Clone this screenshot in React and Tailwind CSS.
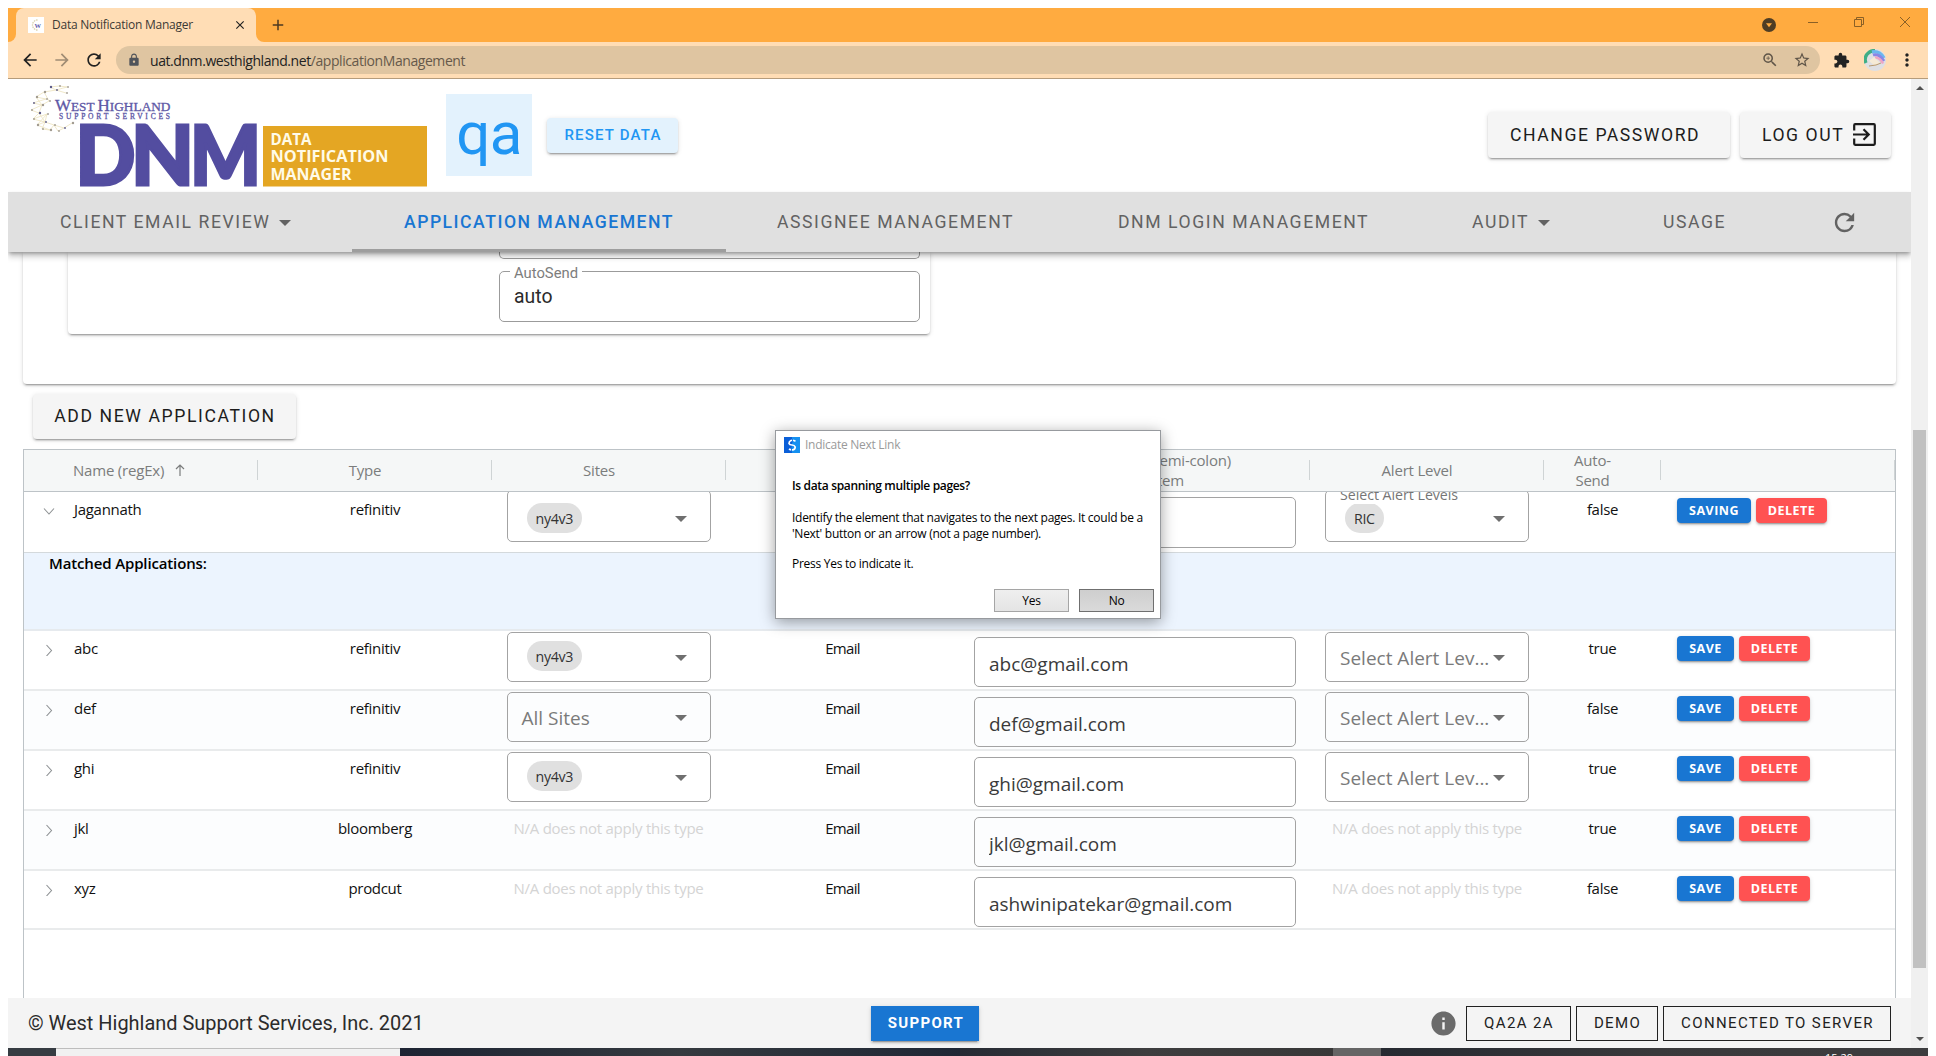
import React from "react";
import {
  MdArrowBack,
  MdArrowForward,
  MdRefresh,
  MdLock,
  MdZoomIn,
  MdStarBorder,
  MdExtension,
  MdMoreVert,
  MdClose,
  MdAdd,
  MdInfo,
} from "react-icons/md";

const COLS = "grid grid-cols-[234px_234px_234px_233px_351px_234px_117px_234px]";
const RAISED =
  "shadow-[0_3px_1px_-2px_rgba(0,0,0,.2),0_2px_2px_0_rgba(0,0,0,.14),0_1px_5px_0_rgba(0,0,0,.12)]";

const Caret = ({ className = "" }) => (
  <svg viewBox="0 0 12 6" className={`h-[6px] w-[12px] shrink-0 fill-current ${className}`}>
    <path d="M0 0h12L6 6z" />
  </svg>
);

/* ---------- browser chrome ---------- */

function Favicon() {
  return (
    <svg viewBox="0 0 16 16" className="h-4 w-4 bg-white">
      <path d="M9.500 3A5 5 0 1 0 9.500 13" fill="none" stroke="#d8cfa8" strokeWidth="1.3" strokeDasharray="1.5 .8" />
      <text x="6.500" y="10.500" fontSize="6.500" fontFamily="Liberation Serif, serif" fontWeight="700" fill="#5b5aa8">W</text>
    </svg>
  );
}

function TabBar() {
  return (
    <div className="flex h-[34px] shrink-0 bg-[#ffab40]">
      <div className="flex w-2 items-end bg-[#ffddb5]">
        <div className="h-full w-2 rounded-br-lg bg-[#ffab40]" />
      </div>
      <div className="flex w-[240px] items-center rounded-t-lg bg-[#ffddb5] pl-3">
        <Favicon />
        <span className="ml-2 w-[181px] text-[12px] tracking-[-0.25px] text-[#3c3a36]">Data Notification Manager</span>
        <MdClose className="h-[14px] w-[14px] shrink-0 text-[#222]" />
      </div>
      <div className="w-2 bg-[#ffddb5]">
        <div className="h-full w-2 rounded-bl-lg bg-[#ffab40]" />
      </div>
      <MdAdd className="mt-2 ml-[5px] h-[18px] w-[18px] text-[#4d3a20]" />
      <div className="ml-auto flex items-start pr-[18px]">
        <svg viewBox="0 0 14 14" className="mt-[10px] h-[14px] w-[14px]">
          <circle cx="7" cy="7" r="7" fill="#4f3d24" />
          <path d="M4 5.2h6L7 9.2z" fill="#ffab40" />
        </svg>
        <svg viewBox="0 0 10 10" className="mt-[9px] ml-8 h-[10px] w-[10px]" stroke="#8a6026" fill="none">
          <path d="M0 5.5h10" />
        </svg>
        <svg viewBox="0 0 10 10" className="mt-[9px] ml-9 h-[10px] w-[10px]" stroke="#8a6026" fill="none">
          <path d="M.5 2.5h7v7h-7zM2.5 2.5v-2h7v7h-2" />
        </svg>
        <svg viewBox="0 0 10 10" className="mt-[9px] ml-9 h-[10px] w-[10px]" stroke="#8a6026" fill="none">
          <path d="M0 0l10 10M10 0L0 10" />
        </svg>
      </div>
    </div>
  );
}

function Toolbar() {
  return (
    <div className="flex h-[37px] shrink-0 items-center border-b border-[#b59c7c] bg-[#ffddb5] text-[#222]">
      <MdArrowBack className="ml-[12px] h-5 w-5" />
      <MdArrowForward className="ml-3 h-5 w-5 text-[#a08c74]" />
      <MdRefresh className="ml-3 h-5 w-5" />
      <div className="ml-3 flex h-7 w-[1704px] items-center rounded-full bg-[#dfc5a1]">
        <MdLock className="ml-[11px] h-[14px] w-[14px] text-[#50545a]" />
        <span className="ml-[9px] text-[14px] tracking-[-0.43px] text-[#222]">
          uat.dnm.westhighland.net<span className="text-[#66594a]">/applicationManagement</span>
        </span>
        <MdZoomIn className="ml-auto h-[18px] w-[18px] text-[#5f5548]" />
        <MdStarBorder className="mr-[9px] ml-[14px] h-[18px] w-[18px] text-[#5f5548]" />
      </div>
      <MdExtension className="ml-[13px] h-[17px] w-[17px]" />
      <svg viewBox="0 0 22 22" className="ml-[14px] h-[22px] w-[22px]">
        <circle cx="11" cy="11" r="11" fill="#dfdfe3" />
        <path d="M2 14A10 9 0 0 1 11 1.500" fill="none" stroke="#3fae86" strokeWidth="3.400" />
        <path d="M8 3c5-1 9 1 12 6" fill="none" stroke="#6cb6ee" strokeWidth="3.400" />
        <path d="M9 6c4-1 8 1 11 6" fill="none" stroke="#8a86e6" strokeWidth="2.800" />
        <path d="M11 8.500c3 0 6 2 8 6" fill="none" stroke="#efa5c4" strokeWidth="2.400" />
        <path d="M5 12l5-4 6 6-5 3z" fill="#f6ead6" />
        <path d="M5 17l7-1 5-2" stroke="#b89a72" fill="none" />
      </svg>
      <MdMoreVert className="ml-[11px] h-5 w-5" />
    </div>
  );
}

/* ---------- page header ---------- */

const GLOBE_NODES = [
  [22, 4], [31, 3], [39, 4], [16, 9], [28, 7], [38, 10], [8, 14], [18, 16], [5, 20], [14, 22], [21, 18],
  [3, 27], [11, 30], [5, 36], [19, 31], [9, 42], [17, 39], [14, 46], [22, 47], [30, 48], [36, 45], [44, 40], [26, 42],
];

function Logo() {
  return (
    <svg viewBox="0 0 404 112" className="ml-[19px] h-[112px] w-[404px] shrink-0">
      <g transform="translate(1 4)">
        <path
          d="M22 4L31 3L39 4L28 7L16 9L8 14L18 16L5 20L14 22L3 27L11 30L5 36L19 31L9 42L17 39L14 46L22 47L26 42L30 48L36 45L44 40M16 9L21 18L14 22L11 30L17 39L26 42L36 45M22 4L28 7L38 10M19 31L17 39M8 14L14 22M5 36L17 39M9 42L22 47"
          fill="none" stroke="#eee5c4" strokeWidth=".9"
        />
        {GLOBE_NODES.map(([x, y], i) => (
          <circle key={i} cx={x + 1} cy={y} r={i % 3 ? 0.9 : 1.2} fill={i % 4 ? "#a09a90" : "#5b5a88"} />
        ))}
      </g>
      <g fontFamily="Liberation Serif, serif" fill="#5e58a6" stroke="#5e58a6" strokeWidth=".3">
        <text x="28" y="32" fontSize="16" textLength="39.5" lengthAdjust="spacingAndGlyphs">
          W<tspan fontSize="12.5">EST</tspan>
        </text>
        <text x="70.500" y="32" fontSize="16" textLength="73" lengthAdjust="spacingAndGlyphs">
          H<tspan fontSize="12.5">IGHLAND</tspan>
        </text>
        <text x="32" y="39.500" fontSize="7.500" textLength="111">SUPPORT SERVICES</text>
      </g>
      <g fontFamily="Lato, sans-serif" fontWeight="900" fontSize="81" fill="#534da0" stroke="#534da0" strokeWidth="3">
        <text x="48.500" y="106" textLength="60" lengthAdjust="spacingAndGlyphs">D</text>
        <text x="104" y="106" textLength="63" lengthAdjust="spacingAndGlyphs">N</text>
        <text x="163" y="106" textLength="71" lengthAdjust="spacingAndGlyphs">M</text>
      </g>
      <rect x="236" y="47" width="164" height="60.500" fill="#e4a623" />
      <g fontFamily="Open Sans, sans-serif" fontWeight="700" fontSize="16.5" fill="#fffbe8">
        <text x="243.5" y="65.500" textLength="41" lengthAdjust="spacingAndGlyphs">DATA</text>
        <text x="243.5" y="83" textLength="118" lengthAdjust="spacingAndGlyphs">NOTIFICATION</text>
        <text x="243.5" y="101" textLength="81" lengthAdjust="spacingAndGlyphs">MANAGER</text>
      </g>
    </svg>
  );
}

function Header() {
  return (
    <header className="flex h-[113px] shrink-0 bg-white font-['Roboto',sans-serif]">
      <Logo />
      <div className="mt-[15px] ml-[15px] flex h-[82px] w-[86px] justify-center bg-[#e3f2fd] pt-[4px] text-[60px] leading-[72px] tracking-[-0.5px] text-[#2196f3]">
        qa
      </div>
      <button className={`mt-[39px] ml-[15px] h-[35px] w-[131px] rounded bg-[#e3f2fd] pl-px text-[15px] font-medium tracking-[1.2px] text-[#2196f3] ${RAISED}`}>
        RESET DATA
      </button>
      <div className="mt-[33px] mr-5 ml-auto flex h-[46px] gap-[10px] text-[17.6px] tracking-[1.55px] text-[#1c1c1c]">
        <button className={`w-[242px] rounded bg-[#f5f5f5] pl-[22px] text-left ${RAISED}`}>CHANGE PASSWORD</button>
        <button className={`flex w-[151px] items-center rounded bg-[#f5f5f5] pl-[22px] ${RAISED}`}>
          LOG OUT
          <svg viewBox="0 0 23 23" className="mb-px ml-[9px] h-[23px] w-[23px]" fill="none" stroke="currentColor" strokeWidth="2.2">
            <path d="M1.2 7.5V2.2q0-1 1-1h18.600q1 0 1 1v18.600q0 1-1 1H2.200q-1 0-1-1v-5.300" />
            <path d="M0 11.500h15M10.500 6.300l5.200 5.200-5.200 5.200" />
          </svg>
        </button>
      </div>
    </header>
  );
}

function Nav() {
  return (
    <nav className="z-10 flex h-[60px] shrink-0 bg-[#e0e0e0] font-['Roboto',sans-serif] text-[17.6px] tracking-[1.57px] text-[#626262] shadow-[0_2px_4px_-1px_rgba(0,0,0,.35),0_5px_6px_0_rgba(0,0,0,.18)]">
      <div className="flex w-[344px] items-center pl-[52px]">
        CLIENT EMAIL REVIEW <Caret className="mt-[2px] ml-[9px]" />
      </div>
      <div className="flex w-[374px] items-center border-b-[3px] border-[#9e9e9e] pt-[3px] pl-[52px] font-medium tracking-[1.5px] text-[#1976d2]">APPLICATION MANAGEMENT</div>
      <div className="flex w-[340px] items-center pl-[51px]">ASSIGNEE MANAGEMENT</div>
      <div className="flex w-[353px] items-center pl-[52px]">DNM LOGIN MANAGEMENT</div>
      <div className="flex w-[192px] items-center pl-[53px]">
        AUDIT <Caret className="mt-[2px] ml-[9px]" />
      </div>
      <div className="flex w-[166px] items-center pl-[52px]">USAGE</div>
      <div className="flex flex-1 items-center justify-center">
        <MdRefresh className="h-[29px] w-[29px]" />
      </div>
    </nav>
  );
}

/* ---------- filter card ---------- */

function FilterCard() {
  return (
    <section className={`ml-[15px] h-[132px] w-[1873px] shrink-0 rounded-b bg-white font-['Roboto',sans-serif] ${RAISED}`}>
      <div className={`ml-[45px] h-[82px] w-[862px] rounded-b bg-white pl-[431px] ${RAISED}`}>
        <div className="h-[7px] w-[421px] rounded-b-[5px] border border-t-0 border-[#9b9b9b]" />
        <div className="relative mt-3 h-[51px] w-[421px] rounded-[5px] border border-[#9b9b9b] pt-[14px] pl-[14px] text-[19.4px] leading-[22px] text-[#2b2b2b]">
          <span className="absolute -top-[8px] left-[10px] bg-white px-1 text-[14.8px] leading-[18px] text-[#7d7d7d]">AutoSend</span>
          auto
        </div>
      </div>
    </section>
  );
}

/* ---------- table ---------- */

const HEAD = "flex h-full items-center pr-5 pb-px";
const Sep = () => <div className="absolute top-[10px] right-0 h-5 w-px bg-[#cfd4d5]" />;

function TableHead() {
  return (
    <div className={`${COLS} h-[42px] border-b border-[#bdc3c7] bg-[#f5f7f7] text-center text-[15px] leading-5 tracking-[-0.2px] text-[#7b7d7d]`}>
      <div className="relative flex items-center pb-px pl-[49px]">
        Name (regEx)
        <svg viewBox="0 0 10 12" className="ml-[11px] h-3 w-[10px]" fill="none" stroke="currentColor" strokeWidth="1.2">
          <path d="M5 12V1M1 5l4-4 4 4" />
        </svg>
        <Sep />
      </div>
      <div className={`relative justify-center ${HEAD}`}>Type<Sep /></div>
      <div className={`relative justify-center ${HEAD}`}>Sites<Sep /></div>
      <div className={`relative justify-center ${HEAD}`}><Sep /></div>
      <div className="relative flex items-center justify-end pr-[79px] pb-px whitespace-nowrap">
        <div className="flex flex-col items-end">
          <span>(semi-colon)</span>
          <span className="pr-[47px]">System</span>
        </div>
        <Sep />
      </div>
      <div className={`relative justify-center ${HEAD}`}>Alert Level<Sep /></div>
      <div className={`relative justify-center ${HEAD}`}>Auto-<br />Send<Sep /></div>
      <div className="relative"><Sep /></div>
    </div>
  );
}

const Chevron = ({ open }) => (
  <svg viewBox="0 0 12 12" className="mt-[13px] ml-[19px] h-3 w-3" fill="none" stroke="#8e9294" strokeWidth="1.1">
    <path d={open ? "M1 3.500l5 5.500 5-5.500" : "M3.500 1l5 5.500-5 5.500"} />
  </svg>
);

function Select({ chip, placeholder, label, first }) {
  return (
    <div className={`relative flex w-[204px] rounded-[5px] border border-[#a3a3a3] ${first ? "-mt-[2px] h-[52px]" : "mt-px h-[50px]"}`}>
      {label && (
        <span className="absolute -top-[5px] left-[10px] bg-white px-1 text-[14.2px] leading-[18px] tracking-[-0.03px] text-[#757575]">{label}</span>
      )}
      {chip ? (
        <span className={`ml-[19px] h-[30px] rounded-full bg-[#e0e0e0] px-[9px] text-[14.2px] leading-[31px] text-[#333] ${first ? "mt-3" : "mt-2"}`}>
          {chip}
        </span>
      ) : (
        <span className="mt-[13px] ml-[14px] text-[19px] leading-6 tracking-normal text-[#7a7a7a]">{placeholder}</span>
      )}
      <Caret className={`absolute right-[23px] text-[#6f6f6f] ${first ? "top-[25px]" : "top-[22px]"}`} />
    </div>
  );
}

const NA = () => <span className="pt-[7px] tracking-[-0.25px] text-[#d4d4d4]">N/A does not apply this type</span>;

const ROWS = [
  { name: "Jagannath", type: "refinitiv", site: "ny4v3", email: "", alert: "RIC", auto: "false", action: "SAVING", open: true },
  { name: "abc", type: "refinitiv", site: "ny4v3", email: "abc@gmail.com", auto: "true" },
  { name: "def", type: "refinitiv", site: "", email: "def@gmail.com", auto: "false", tint: true },
  { name: "ghi", type: "refinitiv", site: "ny4v3", email: "ghi@gmail.com", auto: "true" },
  { name: "jkl", type: "bloomberg", na: true, email: "jkl@gmail.com", auto: "true", tint: true },
  { name: "xyz", type: "prodcut", na: true, email: "ashwinipatekar@gmail.com", auto: "false", last: true },
];

function Row({ r }) {
  const size = r.open ? "h-[61px] border-b border-[#d4d9dc]" : r.last ? "h-[59px] border-b-2 border-[#e9ebec]" : "h-[60px] border-b-2 border-[#e9ebec]";
  return (
    <div className={`${COLS} ${size} overflow-hidden text-[15px] leading-5 tracking-[-0.3px] text-[#111] ${r.tint ? "bg-[#fcfdfe]" : "bg-white"}`}>
      <div className="flex">
        <Chevron open={r.open} />
        <span className="ml-[19px] pt-[7px]">{r.name}</span>
      </div>
      <div className="pt-[7px] text-center">{r.type}</div>
      <div className="flex items-start justify-center pr-px">
        {r.na ? <NA /> : <Select first={r.open} chip={r.site} placeholder="All Sites" />}
      </div>
      <div className="pt-[7px] text-center tracking-[-0.7px]">Email</div>
      <div className="pl-[15px]">
        <div className={`w-[322px] rounded-[5px] border border-[#a3a3a3] pt-[14px] pl-[14px] text-[19px] tracking-normal text-[#3a3a3a] ${r.open ? "mt-[5px] h-[51px]" : "mt-[6px] h-[50px]"}`}>
          <div className="h-[23px] overflow-hidden leading-6">{r.email}</div>
        </div>
      </div>
      <div className="flex items-start justify-center">
        {r.na ? <NA /> : <Select first={r.open} chip={r.alert} placeholder="Select Alert Lev..." label={r.open && "Select Alert Levels"} />}
      </div>
      <div className="pt-[7px] text-center">{r.auto}</div>
      <div className={`flex gap-[5px] pl-4 text-[12.5px] font-bold tracking-[0.5px] text-white ${r.open ? "pt-[6px]" : "pt-[5px]"}`}>
        <button className={`h-[25px] rounded bg-[#1976d2] pt-px ${r.open ? "w-[74px]" : "w-[57px]"} ${RAISED}`}>{r.action || "SAVE"}</button>
        <button className={`h-[25px] w-[71px] rounded bg-[#ff5252] pt-px ${RAISED}`}>DELETE</button>
      </div>
    </div>
  );
}

function Table() {
  return (
    <section className="mt-[10px] ml-[15px] h-[549px] w-[1873px] shrink-0 border border-b-0 border-[#bdc3c7] bg-white">
      <TableHead />
      <Row r={ROWS[0]} />
      <div className="h-[78px] border-b-2 border-[#e6eaee] bg-[#ecf4fe] pl-[25px] text-[15px] leading-5 font-semibold tracking-[-0.14px] text-black">
        Matched Applications:
      </div>
      {ROWS.slice(1).map((r) => (
        <Row key={r.name} r={r} />
      ))}
    </section>
  );
}

/* ---------- footer, scrollbar, dialog, taskbar ---------- */

function Footer() {
  return (
    <footer className="flex h-[50px] shrink-0 items-start bg-[#f4f4f4] pt-2 font-['Roboto',sans-serif] text-[#212121]">
      <span className="w-[863px] pl-5 text-[19.95px] leading-[34px] text-[#2b2b2b]">© West Highland Support Services, Inc. 2021</span>
      <button className={`h-[35px] w-[108px] bg-[#1976d2] pl-[2px] text-[15px] font-bold tracking-[1.3px] text-white ${RAISED}`}>SUPPORT</button>
      <div className="mr-5 ml-auto flex items-center text-[15px] tracking-[1.36px]">
        <MdInfo className="mr-2 h-[29px] w-[29px] text-[#6b6b6b]" />
        <span className="flex h-[35px] w-[105px] items-center justify-center border border-[#212121] pl-px">QA2A 2A</span>
        <span className="ml-[5px] flex h-[35px] w-[82px] items-center justify-center border border-[#212121] pl-px">DEMO</span>
        <span className="ml-[5px] flex h-[35px] w-[228px] items-center justify-center border border-[#212121] pl-px">CONNECTED TO SERVER</span>
      </div>
    </footer>
  );
}

function Scrollbar() {
  return (
    <div className="z-20 flex w-[17px] shrink-0 flex-col items-center bg-[#f0f0f0]">
      <svg viewBox="0 0 8 4" className="mt-[7px] h-1 w-2"><path d="M0 4h8L4 0z" fill="#505050" /></svg>
      <div className="mt-[340px] h-[538px] w-[13px] bg-[#c1c1c1]" />
      <svg viewBox="0 0 8 4" className="mt-auto mb-[7px] h-1 w-2"><path d="M0 0h8L4 4z" fill="#505050" /></svg>
    </div>
  );
}

function Dialog() {
  return (
    <div className="absolute top-[430px] left-[775px] z-20 h-[189px] w-[386px] border border-[#979a9e] bg-white text-[12px] leading-4 tracking-[-0.27px] text-black shadow-[0_3px_14px_rgba(0,0,0,.38)]">
      <div className="mt-[6px] ml-2 flex h-4 items-center">
        <svg viewBox="0 0 16 16" className="h-4 w-4">
          <rect width="8" height="16" fill="#0a5fd8" />
          <rect x="8" width="8" height="16" fill="#1590f0" />
          <path d="M11.500 4.200Q9 2.800 7 3.500T5 6.500Q5.500 8 8 8T11.200 10Q11.200 12.300 9 12.800T5 12" fill="none" stroke="#fff" strokeWidth="1.700" />
          <path d="M8.500 2v4M7.500 9.500v5" stroke="#0f78e6" strokeWidth=".9" />
        </svg>
        <span className="ml-[5px] text-[#9a9a9a]">Indicate Next Link</span>
      </div>
      <div className="mt-[25px] ml-4 whitespace-nowrap">
        <p className="font-semibold tracking-[-0.34px]">Is data spanning multiple pages?</p>
        <p className="mt-4">
          Identify the element that navigates to the next pages. It could be a
          <br />
          'Next' button or an arrow (not a page number).
        </p>
        <p className="mt-[14px]">Press Yes to indicate it.</p>
      </div>
      <div className="mt-[17px] mr-[6px] flex justify-end gap-[10px]">
        <button className="h-[23px] w-[75px] border border-[#a5a5a5] bg-gradient-to-b from-[#efefef] to-[#e4e4e4]">Yes</button>
        <button className="h-[23px] w-[75px] border border-[#6f6f6f] bg-gradient-to-b from-[#cecece] to-[#dadada]">No</button>
      </div>
    </div>
  );
}

function Taskbar() {
  return (
    <div className="flex h-2 shrink-0 overflow-hidden bg-[#3a3a3b] text-white">
      <div className="w-12 bg-[#363c42]" />
      <div className="w-[344px] border-t border-[#bdbdbd] bg-[#f1f1f1]" />
      <div className="w-[560px] bg-gradient-to-r from-[#1d2433] via-[#353a3f] to-[#1f2735]" />
      <div className="w-[373px] bg-gradient-to-r from-[#262b34] via-[#3d3d3e] to-[#383838]" />
      <div className="w-12 bg-[#656565]" />
      <div className="flex flex-1 justify-end bg-gradient-to-r from-[#262a31] via-[#39393b] to-[#3d3d3f] pr-[75px]">
        <span className="mt-1 text-[11px] leading-3">15:29</span>
      </div>
    </div>
  );
}

export default function App() {
  return (
    <div className="relative flex h-[1056px] w-[1936px] flex-col overflow-hidden bg-white px-2 pt-2 font-['Open_Sans','Noto_Sans',sans-serif]">
      <TabBar />
      <Toolbar />
      <div className="flex h-[969px] shrink-0 overflow-hidden">
        <main className="flex w-[1903px] flex-col">
          <Header />
          <Nav />
          <div className="flex h-[746px] flex-col overflow-hidden bg-white">
            <FilterCard />
            <button className={`mt-[10px] ml-[25px] h-[45px] w-[263px] shrink-0 rounded bg-[#f5f5f5] pl-px font-['Roboto',sans-serif] text-[17.6px] tracking-[1.6px] text-[#1c1c1c] ${RAISED}`}>
              ADD NEW APPLICATION
            </button>
            <Table />
          </div>
          <Footer />
        </main>
        <Scrollbar />
      </div>
      <Taskbar />
      <Dialog />
    </div>
  );
}
